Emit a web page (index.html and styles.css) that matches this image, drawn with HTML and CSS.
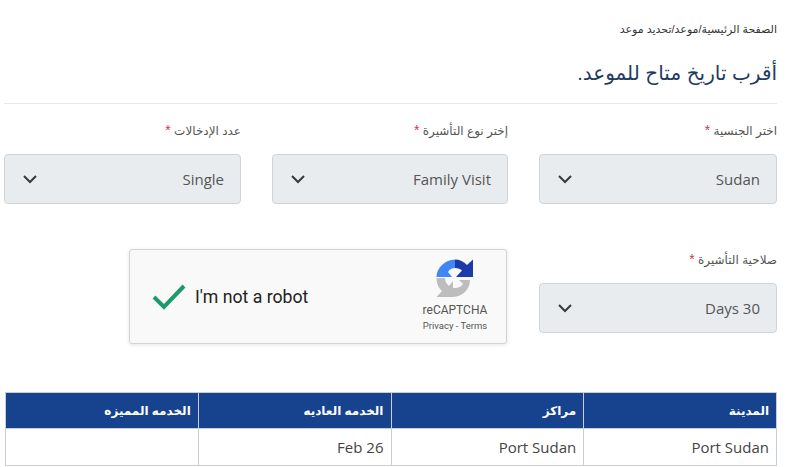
FILE: index.html
```html
<!DOCTYPE html>
<html lang="ar" dir="rtl">
<head>
  <meta charset="UTF-8">
  <meta name="viewport" content="width=device-width, initial-scale=1.0">
  <title>تحديد موعد</title>
  <link rel="stylesheet" href="styles.css">
</head>
<body>
<div class="page">
  <div class="breadcrumb">الصفحة الرئيسية/موعد/تحديد موعد</div>
  <h1 class="title">أقرب تاريخ متاح للموعد.</h1>
  <hr class="divider">

  <!-- Form -->
  <div class="form-grid">
    <div class="field">
      <label>اختر الجنسية <span class="req">*</span></label>
      <div class="select">
        <span>Sudan</span>
        <svg class="chevron" viewBox="0 0 16 10"><path d="M2 2l6 6 6-6"/></svg>
      </div>
    </div>
    <div class="field">
      <label>إختر نوع التأشيرة <span class="req">*</span></label>
      <div class="select">
        <span>Family Visit</span>
        <svg class="chevron" viewBox="0 0 16 10"><path d="M2 2l6 6 6-6"/></svg>
      </div>
    </div>
    <div class="field">
      <label>عدد الإدخالات <span class="req">*</span></label>
      <div class="select">
        <span>Single</span>
        <svg class="chevron" viewBox="0 0 16 10"><path d="M2 2l6 6 6-6"/></svg>
      </div>
    </div>
    <div class="field field-low">
      <label>صلاحية التأشيرة <span class="req">*</span></label>
      <div class="select">
        <span>30 Days</span>
        <svg class="chevron" viewBox="0 0 16 10"><path d="M2 2l6 6 6-6"/></svg>
      </div>
    </div>
    <div class="captcha" dir="ltr">
      <svg class="check" viewBox="0 0 36 28"><path d="M3 14l10 10L33 3"/></svg>
      <span class="captcha-text">I'm not a robot</span>
      <div class="captcha-brand">
        <svg class="captcha-logo" viewBox="0 0 40 40">
          <path fill="#bdbdbd" d="M1.500 19H10C10 22 11.500 25 14 27L18 22V38H1.500L7 32C3.500 29 1.500 24 1.500 19Z"/>
          <path fill="#bdbdbd" d="M18 28.800C22 29.500 26 28 28 25L24 21H35C35 30 28 37.500 18 38Z"/>
          <path fill="#4285f4" d="M20 .5V9C17 9 14.500 10.500 13 13L17 18H1.500C1.500 9 10 .5 20 .5Z"/>
          <path fill="#1c3aa9" d="M20 .5C24.500 .5 29 2.500 32 6L38 .5V18H21L27 11.500C25.500 10 23 9 20 9Z"/>
        </svg>
        <div class="captcha-name">reCAPTCHA</div>
        <div class="captcha-links">Privacy - Terms</div>
      </div>
    </div>
  </div>

  <!-- Dates -->
  <table class="dates">
    <thead>
      <tr>
        <th>المدينة</th>
        <th>مراكز</th>
        <th>الخدمه العاديه</th>
        <th>الخدمه المميزه</th>
      </tr>
    </thead>
    <tbody>
      <tr>
        <td>Port Sudan</td>
        <td>Port Sudan</td>
        <td>Feb 26</td>
        <td></td>
      </tr>
    </tbody>
  </table>
</div>
</body>
</html>
```

FILE: styles.css
```css
* { margin: 0; padding: 0; box-sizing: border-box; }
html, body { height: 100%; overflow: hidden; }
body {
  background: #fff;
  color: #444;
  font-family: 'Open Sans', 'DejaVu Sans', sans-serif;
}

.page {
  width: 790px;
  padding: 22px 13px 0 5px;
}

.breadcrumb {
  font-family: 'Liberation Sans', 'DejaVu Sans', sans-serif;
  font-size: 11px;
  line-height: 15px;
  color: #333;
}

.title {
  margin-top: 20px;
  font-family: 'Liberation Sans', 'DejaVu Sans', sans-serif;
  font-size: 20px;
  font-weight: normal;
  line-height: 32px;
  color: #1f3a63;
}

.divider {
  margin: 14px 0 0 -1px;
  border: 0;
  border-top: 1px solid #e6e8ea;
}

/* Form */
.form-grid {
  display: grid;
  grid-template-columns: 238px 236px 237px;
  column-gap: 31px;
  padding-top: 18px;
}
.field label {
  display: block;
  font-family: 'Liberation Sans', 'DejaVu Sans', sans-serif;
  font-size: 12px;
  line-height: 17px;
  color: #555;
  margin-bottom: 14px;
}
.req { color: #d9304f; font-size: 14px; }
.select {
  display: flex;
  justify-content: space-between;
  align-items: center;
  height: 50px;
  padding: 0 16px 0 17px;
  background: #e9ecef;
  border: 1px solid #ced4da;
  border-radius: 4px;
  font-size: 15px;
  color: #555;
}
.chevron {
  width: 16px;
  height: 10px;
  fill: none;
  stroke: #343a40;
  stroke-width: 2;
}
.field-low { margin-top: 47px; }

/* Captcha */
.captcha {
  grid-column: 2 / span 2;
  justify-self: start;
  display: flex;
  align-items: center;
  width: 378px;
  height: 95px;
  margin: 45px 1px 0 0;
  padding-left: 21px;
  background: #f9f9f9;
  border: 1px solid #d3d3d3;
  border-radius: 3px;
  box-shadow: 0 1px 4px rgba(0, 0, 0, 0.1);
  font-family: Roboto, sans-serif;
  color: #222;
}
.check {
  width: 36px;
  height: 28px;
  fill: none;
  stroke: #1c9a6c;
  stroke-width: 4;
}
.captcha-text {
  margin-left: 8px;
  font-size: 17.700px;
}
.captcha-brand {
  margin-left: auto;
  width: 72px;
  margin-right: 15px;
  text-align: center;
  color: #555;
}
.captcha-logo {
  display: block;
  width: 40px;
  height: 40px;
  margin: 0 auto 4px;
}
.captcha-name { font-size: 12px; line-height: 15px; }
.captcha-links { font-size: 9.500px; line-height: 16px; white-space: nowrap; }

/* Dates table */
.dates {
  width: 772px;
  margin-top: 48px;
  border-collapse: collapse;
  table-layout: fixed;
  font-size: 15px;
}
.dates th, .dates td {
  border: 1px solid #c9ced4;
  padding: 0 7px;
  text-align: right;
}
.dates th {
  height: 36px;
  background: #16428e;
  color: #fff;
  font-family: 'Liberation Sans', 'DejaVu Sans', sans-serif;
  font-size: 12px;
  font-weight: bold;
  border-bottom: 0;
}
.dates td {
  height: 37px;
  color: #444;
}
```
